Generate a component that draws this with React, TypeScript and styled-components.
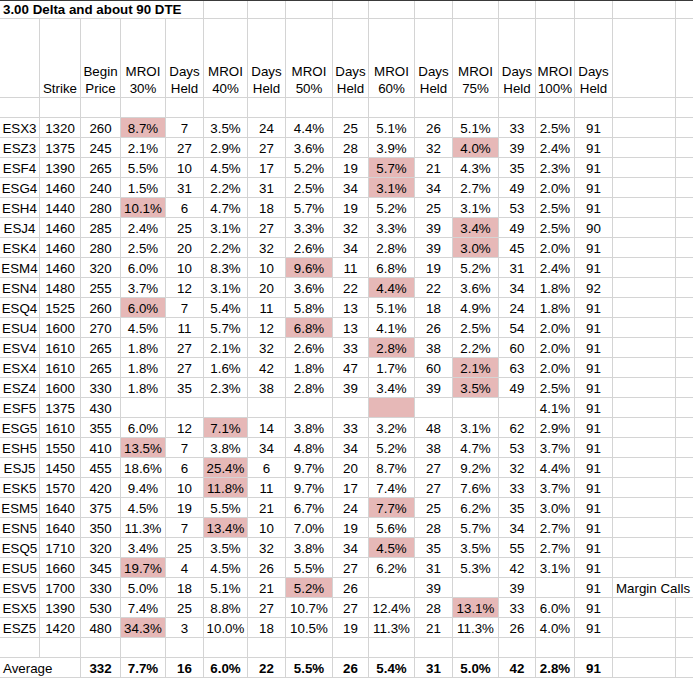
import React from 'react';
import styled, { createGlobalStyle } from 'styled-components';

const GlobalStyle = createGlobalStyle`
  html, body {
    margin: 0;
    padding: 0;
    background: #fff;
  }
  body {
    overflow: hidden;
  }
`;

// pixel widths of the spreadsheet columns A..Q (Q is cut off by the window)
const COLUMN_WIDTHS = [40, 41, 40, 45, 38, 44, 38, 47, 36, 46, 38, 46, 37, 39, 38, 63, 17];

const Sheet = styled.div`
  width: 693px;
  border-top: 1px solid #3a3a3a;
  font-family: 'Liberation Sans', Arial, sans-serif;
  font-size: 13.33px;
  color: #000;
`;

const Row = styled.div<{ $height: number }>`
  display: grid;
  grid-template-columns: ${COLUMN_WIDTHS.map(w => `${w}px`).join(' ')};
  height: ${p => p.$height}px;
`;

const Cell = styled.div<{ $span?: number; $highlight?: boolean; $bold?: boolean; $left?: boolean }>`
  grid-column: span ${p => p.$span ?? 1};
  box-sizing: border-box;
  display: flex;
  flex-direction: column;
  justify-content: flex-end;
  align-items: ${p => (p.$left ? 'flex-start' : 'center')};
  padding-left: ${p => (p.$left ? '3px' : '0')};
  border-right: 1px solid #d4d4d4;
  border-bottom: 1px solid #d4d4d4;
  background: ${p => (p.$highlight ? '#e6b8b7' : 'transparent')};
  font-weight: ${p => (p.$bold ? 700 : 400)};
  text-align: ${p => (p.$left ? 'left' : 'center')};
  line-height: 17px;
  white-space: pre;
  overflow: visible;

  &:last-child {
    border-right: none;
  }
`;

const HEADERS = [
  '',
  'Strike',
  'Begin\nPrice',
  'MROI\n30%',
  'Days\nHeld',
  'MROI\n40%',
  'Days\nHeld',
  'MROI\n50%',
  'Days\nHeld',
  'MROI\n60%',
  'Days\nHeld',
  'MROI\n75%',
  'Days\nHeld',
  'MROI\n100%',
  'Days\nHeld',
  '',
  '',
];

// "-" is an empty cell, "*" marks the shaded best result
const ROWS = [
  'ESX3 1320 260 8.7%* 7 3.5% 24 4.4% 25 5.1% 26 5.1% 33 2.5% 91',
  'ESZ3 1375 245 2.1% 27 2.9% 27 3.6% 28 3.9% 32 4.0%* 39 2.4% 91',
  'ESF4 1390 265 5.5% 10 4.5% 17 5.2% 19 5.7%* 21 4.3% 35 2.3% 91',
  'ESG4 1460 240 1.5% 31 2.2% 31 2.5% 34 3.1%* 34 2.7% 49 2.0% 91',
  'ESH4 1440 280 10.1%* 6 4.7% 18 5.7% 19 5.2% 25 3.1% 53 2.5% 91',
  'ESJ4 1460 285 2.4% 25 3.1% 27 3.3% 32 3.3% 39 3.4%* 49 2.5% 90',
  'ESK4 1460 280 2.5% 20 2.2% 32 2.6% 34 2.8% 39 3.0%* 45 2.0% 91',
  'ESM4 1460 320 6.0% 10 8.3% 10 9.6%* 11 6.8% 19 5.2% 31 2.4% 91',
  'ESN4 1480 255 3.7% 12 3.1% 20 3.6% 22 4.4%* 22 3.6% 34 1.8% 92',
  'ESQ4 1525 260 6.0%* 7 5.4% 11 5.8% 13 5.1% 18 4.9% 24 1.8% 91',
  'ESU4 1600 270 4.5% 11 5.7% 12 6.8%* 13 4.1% 26 2.5% 54 2.0% 91',
  'ESV4 1610 265 1.8% 27 2.1% 32 2.6% 33 2.8%* 38 2.2% 60 2.0% 91',
  'ESX4 1610 265 1.8% 27 1.6% 42 1.8% 47 1.7% 60 2.1%* 63 2.0% 91',
  'ESZ4 1600 330 1.8% 35 2.3% 38 2.8% 39 3.4% 39 3.5%* 49 2.5% 91',
  'ESF5 1375 430 - - - - - - -* - - - 4.1% 91',
  'ESG5 1610 355 6.0% 12 7.1%* 14 3.8% 33 3.2% 48 3.1% 62 2.9% 91',
  'ESH5 1550 410 13.5%* 7 3.8% 34 4.8% 34 5.2% 38 4.7% 53 3.7% 91',
  'ESJ5 1450 455 18.6% 6 25.4%* 6 9.7% 20 8.7% 27 9.2% 32 4.4% 91',
  'ESK5 1570 420 9.4% 10 11.8%* 11 9.7% 17 7.4% 27 7.6% 33 3.7% 91',
  'ESM5 1640 375 4.5% 19 5.5% 21 6.7% 24 7.7%* 25 6.2% 35 3.0% 91',
  'ESN5 1640 350 11.3% 7 13.4%* 10 7.0% 19 5.6% 28 5.7% 34 2.7% 91',
  'ESQ5 1710 320 3.4% 25 3.5% 32 3.8% 34 4.5%* 35 3.5% 55 2.7% 91',
  'ESU5 1660 345 19.7%* 4 4.5% 26 5.5% 27 6.2% 31 5.3% 42 3.1% 91',
  'ESV5 1700 330 5.0% 18 5.1% 21 5.2%* 26 - 39 - 39 - 91',
  'ESX5 1390 530 7.4% 25 8.8% 27 10.7% 27 12.4% 28 13.1%* 33 6.0% 91',
  'ESZ5 1420 480 34.3%* 3 10.0% 18 10.5% 19 11.3% 21 11.3% 26 4.0% 91',
];

const NOTES: Record<string, string> = {
  ESV5: 'Margin Calls',
};

const AVERAGES = ['332', '7.7%', '16', '6.0%', '22', '5.5%', '26', '5.4%', '31', '5.0%', '42', '2.8%', '91'];

const parseCell = (raw: string) => {
  const highlight = raw.endsWith('*');
  const text = raw.replace('*', '');
  return { highlight, text: text === '-' ? '' : text };
};

const EmptyRow: React.FC = () => (
  <Row $height={20}>
    {COLUMN_WIDTHS.map((_, i) => (
      <Cell key={i} />
    ))}
  </Row>
);

const App: React.FC = () => (
  <>
    <GlobalStyle />
    <Sheet>
      <Row $height={17}>
        <Cell $span={5} $left $bold>
          3.00 Delta and about 90 DTE
        </Cell>
        {COLUMN_WIDTHS.slice(5).map((_, i) => (
          <Cell key={i} />
        ))}
      </Row>

      <Row $height={80}>
        {HEADERS.map((h, i) => (
          <Cell key={i}>{h}</Cell>
        ))}
      </Row>

      <EmptyRow />

      {ROWS.map(line => {
        const cells = line.split(' ').map(parseCell);
        const ticker = cells[0].text;
        const note = NOTES[ticker];

        return (
          <Row key={ticker} $height={20}>
            {cells.map((c, i) => (
              <Cell key={i} $highlight={c.highlight}>
                {c.text}
              </Cell>
            ))}
            {note ? (
              <Cell $span={2} $left>
                {note}
              </Cell>
            ) : (
              <>
                <Cell />
                <Cell />
              </>
            )}
          </Row>
        );
      })}

      <EmptyRow />

      <Row $height={20}>
        <Cell $span={2} $left>
          Average
        </Cell>
        {AVERAGES.map((v, i) => (
          <Cell key={i} $bold>
            {v}
          </Cell>
        ))}
        <Cell />
        <Cell />
      </Row>
    </Sheet>
  </>
);

export default App;
